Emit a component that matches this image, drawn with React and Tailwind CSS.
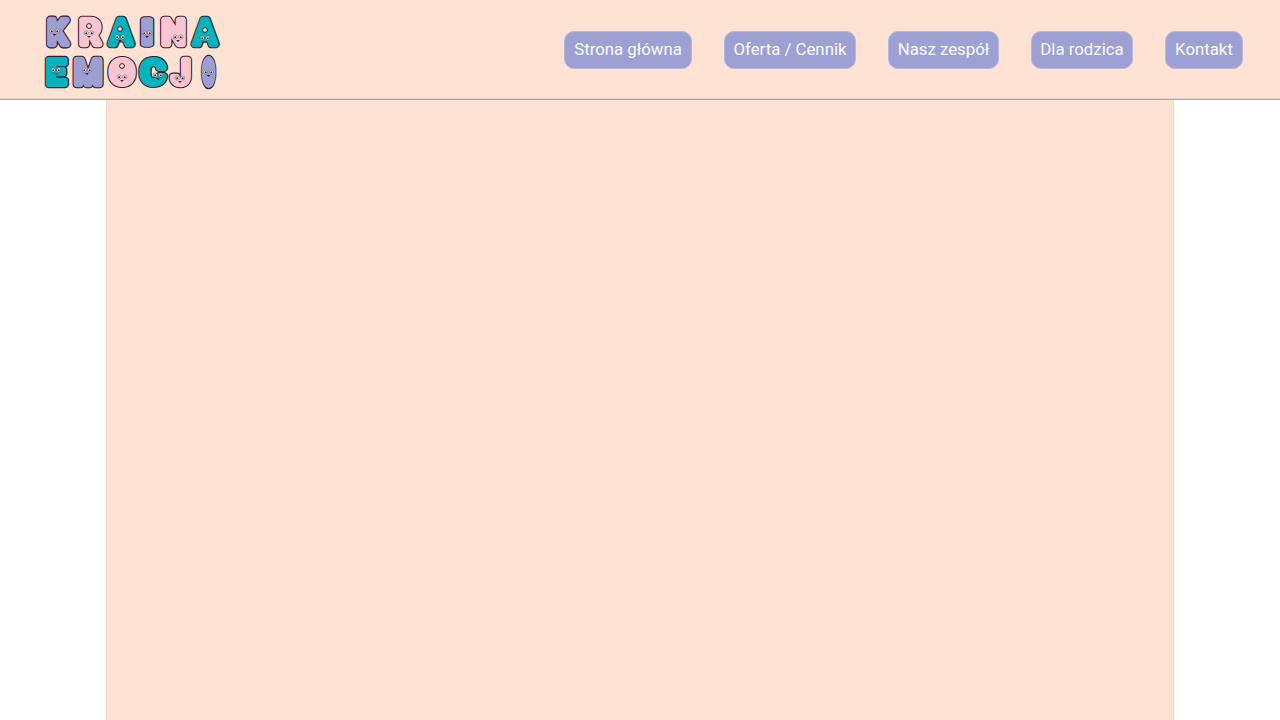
const P = '#9c9fd2';
const K = '#f8c5d0';
const T = '#00b4bd';
const INK = '#35182a';
const BG = '#fee2d4';

const letters = [
  { ch: 'K', x: 57.5, y: 43.8, sx: 0.9, c: P, fx: 54.5, fy: 31 },
  { ch: 'R', x: 90, y: 43.8, sx: 0.95, c: K, fx: 89, fy: 33, hole: [89, 26], plug: [89, 27, 4, 4] },
  { ch: 'A', x: 121, y: 43.8, sx: 0.96, c: T, fx: 120, fy: 37, hole: [120, 29], plug: [120, 32, 4, 4] },
  { ch: 'I', x: 147, y: 43.8, sx: 1.25, c: P, fx: 147, fy: 33 },
  { ch: 'N', x: 173.5, y: 43.8, sx: 0.97, c: K, fx: 178, fy: 37 },
  { ch: 'A', x: 205, y: 43.8, sx: 0.96, c: T, fx: 205, fy: 38, hole: [205, 30], plug: [205, 33, 4, 4] },
  { ch: 'E', x: 56, y: 83.8, sx: 1, c: T, fx: 56, fy: 70 },
  { ch: 'M', x: 88, y: 83.8, sx: 0.93, c: P, fx: 87, fy: 70 },
  { ch: 'O', x: 122, y: 83.8, sx: 1.05, c: K, fx: 122, fy: 77, hole: [122, 66], plug: [122, 71, 6, 9] },
  { ch: 'C', x: 153, y: 83.8, sx: 1.1, c: T, fx: 158, fy: 75 },
  { ch: 'J', x: 181, y: 83.8, sx: 0.96, c: K, fx: 180, fy: 78 },
  { ch: 'O', x: 208.5, y: 83.8, sx: 0.5, c: P, fx: 208.5, fy: 72, plug: [208.5, 71, 3, 10] },
];

function Face({ x, y }) {
  return (
    <g>
      <circle cx={x - 2.8} cy={y} r="2" fill="#fff" stroke={INK} strokeWidth="0.4" />
      <circle cx={x + 2.8} cy={y} r="2" fill="#fff" stroke={INK} strokeWidth="0.4" />
      <circle cx={x - 2.8} cy={y + 0.2} r="1" fill={INK} />
      <circle cx={x + 2.8} cy={y + 0.2} r="1" fill={INK} />
      <path d={`M${x - 1.8} ${y + 3}q1.8 3.4 3.6 0z`} fill="#5a1a2a" />
    </g>
  );
}

function Logo() {
  return (
    <svg width="190" height="99" viewBox="0 0 190 99" className="block shrink-0" role="img" aria-label="Kraina Emocji">
      <g transform="translate(-40 0)" style={{ fontFamily: 'Roboto, sans-serif', fontWeight: 500, fontSize: 34 }}>
        {letters.map((l, i) => (
          <g key={i}>
            <g transform={`translate(${l.x} ${l.y}) scale(${l.sx} 1)`}>
              <text textAnchor="middle" fill={INK} stroke={INK} strokeWidth="8.4" strokeLinejoin="round" vectorEffect="non-scaling-stroke">{l.ch}</text>
              <text textAnchor="middle" fill={l.c} stroke={l.c} strokeWidth="6.2" strokeLinejoin="round" vectorEffect="non-scaling-stroke">{l.ch}</text>
            </g>
            {l.plug && <ellipse cx={l.plug[0]} cy={l.plug[1]} rx={l.plug[2]} ry={l.plug[3]} fill={l.c} />}
            {l.hole && <circle cx={l.hole[0]} cy={l.hole[1]} r="2.4" fill={BG} stroke={INK} strokeWidth="1" />}
            <Face x={l.fx} y={l.fy} />
          </g>
        ))}
      </g>
    </svg>
  );
}

const nav = [
  { label: 'Strona główna', cls: 'w-[128px]' },
  { label: 'Oferta / Cennik', cls: 'w-[132px]' },
  { label: 'Nasz zespół', cls: 'w-[111px]' },
  { label: 'Dla rodzica', cls: 'w-[102px]' },
  { label: 'Kontakt', cls: 'w-[78px]' },
];

export default function App() {
  return (
    <div className="h-screen overflow-hidden bg-white font-['Roboto',sans-serif]">
      <header className="flex h-[100px] items-center justify-between border-b border-[#a5a7c6] bg-[#fee2d4] pl-10 pr-[37px] shadow-[inset_0_-1px_0_#e6d3c9]">
        <Logo />
        <nav className="flex gap-8">
          {nav.map((n) => (
            <a key={n.label} className={`flex h-[38px] items-center justify-center whitespace-nowrap rounded-[10px] border border-[#b4b7de] bg-[#9ca0d2] pt-px text-[16.8px] text-[#fbfbff] ${n.cls}`}>
              {n.label}
            </a>
          ))}
        </nav>
      </header>
      <main className="mx-auto h-[620px] w-[1068px] border-x border-[#f3d8ca] bg-[#fee2d4]" />
    </div>
  );
}
